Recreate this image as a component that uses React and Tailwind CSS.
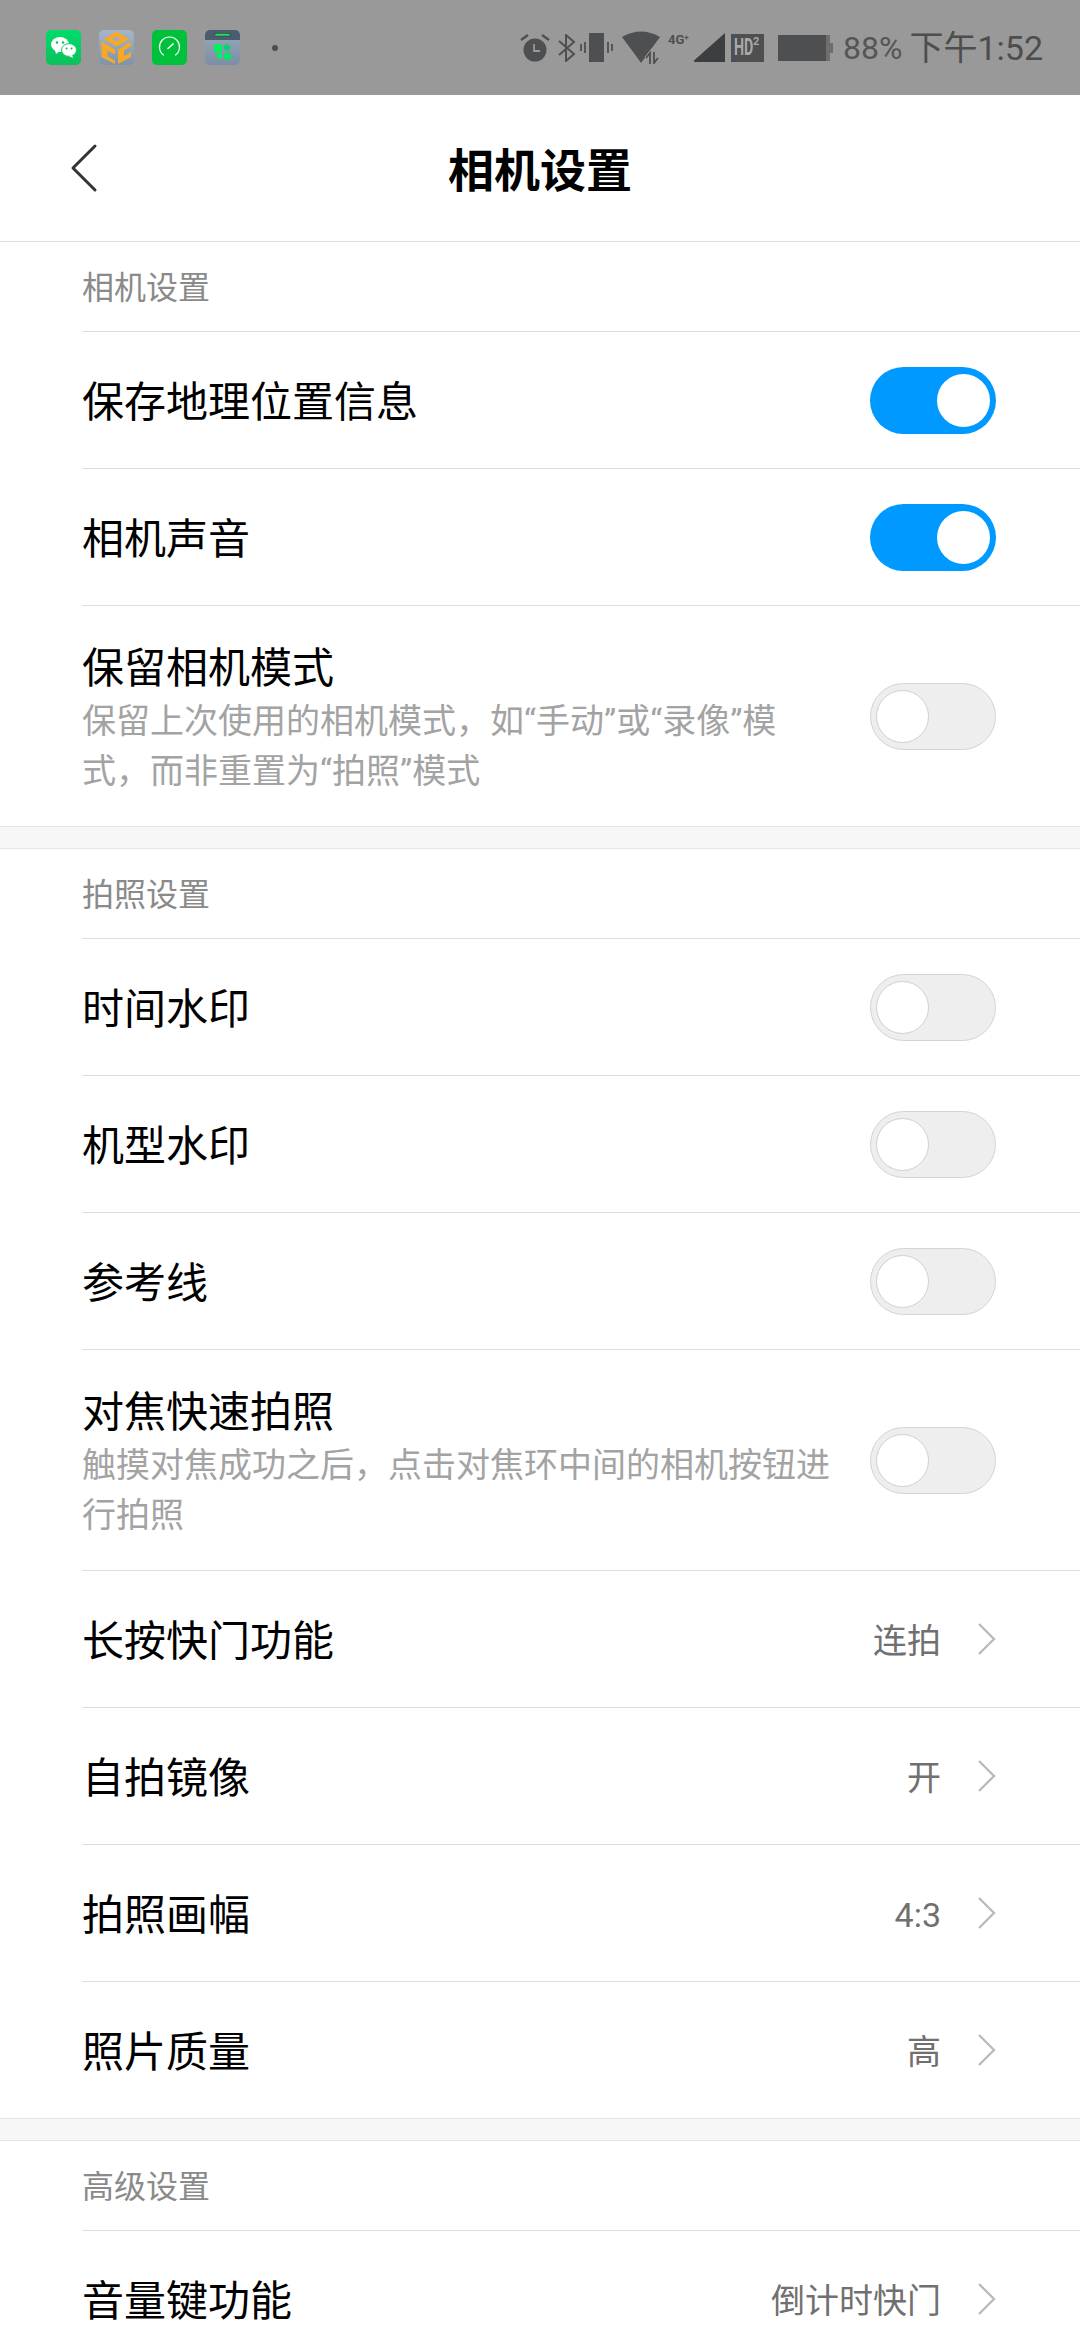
const fontStack = "font-['Roboto','Noto_Sans_CJK_SC',sans-serif]"

function Toggle({ on }) {
    if (on) {
        return (
            <div className="flex h-[67px] w-[126px] shrink-0 items-center justify-end rounded-full bg-[#0099ff] pr-[6px]">
                <div className="h-[53px] w-[53px] rounded-full bg-white" />
            </div>
        )
    }
    return (
        <div className="flex h-[67px] w-[126px] shrink-0 items-center justify-start rounded-full border border-[#d4d4d4] bg-[#eeeeee] pl-[5px]">
            <div className="h-[53px] w-[53px] rounded-full border border-[#d0d0d0] bg-white" />
        </div>
    )
}

function Chevron() {
    return (
        <svg width="19" height="34" viewBox="0 0 19 34" fill="none" className="shrink-0">
            <path d="M2 2 L17 17 L2 32" stroke="#bbbbbb" strokeWidth="2.4" />
        </svg>
    )
}

function Row({ title, desc, on, value, tall }) {
    return (
        <div className={`flex items-center justify-between border-b border-[#dedede] pr-[84px] ${tall ? 'h-[221px]' : 'h-[137px]'}`}>
            <div className="min-w-0 pt-[6px]">
                <div className={`whitespace-nowrap text-[42px] text-black ${desc ? 'leading-[54px]' : 'leading-[56px]'}`}>{title}</div>
                {desc && (
                    <div className="whitespace-nowrap text-[34px] leading-[50px] text-[#a3a3a3]">
                        {desc[0]}
                        <br />
                        {desc[1]}
                    </div>
                )}
            </div>
            {value !== undefined ? (
                <div className="flex items-center gap-[36px]">
                    <span className="pt-[4px] text-[34px] leading-[44px] text-[#707070]">{value}</span>
                    <Chevron />
                </div>
            ) : (
                <Toggle on={on} />
            )}
        </div>
    )
}

function Section({ title, children }) {
    return (
        <div className="pl-[82px]">
            <div className="flex h-[90px] items-center border-b border-[#dedede] pt-[2px] text-[32px] text-[#8a8a8a]">{title}</div>
            {children}
        </div>
    )
}

function Gap() {
    return <div className="relative -mt-px h-[23px] border-y border-[#e6e6e6] bg-[#f7f7f7]" />
}

function WeChatIcon() {
    return (
        <svg width="35" height="35" viewBox="0 0 35 35">
            <defs>
                <linearGradient id="wx" x1="0" y1="0" x2="0" y2="1">
                    <stop offset="0" stopColor="#00dc6c" />
                    <stop offset="1" stopColor="#0cc05c" />
                </linearGradient>
            </defs>
            <rect width="35" height="35" rx="5" fill="url(#wx)" />
            <ellipse cx="14" cy="14.5" rx="9" ry="7.5" fill="#fff" />
            <path d="M9 20 L10 24 L14 21 Z" fill="#fff" />
            <ellipse cx="23" cy="20" rx="7.5" ry="6.4" fill="#fff" stroke="#0ccf66" strokeWidth="1" />
            <path d="M26 25 L27 28 L23 26 Z" fill="#fff" />
            <circle cx="11" cy="12.5" r="1.2" fill="#0cc05c" />
            <circle cx="17" cy="12.5" r="1.2" fill="#0cc05c" />
            <circle cx="20.5" cy="18.5" r="1" fill="#0cc05c" />
            <circle cx="25.5" cy="18.5" r="1" fill="#0cc05c" />
        </svg>
    )
}

function CubeIcon() {
    return (
        <svg width="35" height="35" viewBox="0 0 35 35">
            <defs>
                <linearGradient id="cube" x1="0" y1="0" x2="0" y2="1">
                    <stop offset="0" stopColor="#a3b6cb" />
                    <stop offset="1" stopColor="#7f93a8" />
                </linearGradient>
            </defs>
            <rect width="35" height="35" rx="5" fill="url(#cube)" />
            <path fillRule="evenodd" d="M17.5 1.5 L30 9 L17.5 16.5 L5 9 Z M17.5 6.5 L22 9 L17.5 11.5 L13 9 Z" fill="#f9a825" />
            <path d="M2.5 11.5 L16 19.5 L16 24.5 L8.5 20.5 L8.5 26.5 L16 30.5 L16 34 L2.5 27 Z" fill="#f9a825" />
            <path d="M32 11.5 L19 19.5 L19 34 L32 27 L32 22 L25 26 L25 20.5 L32 16 Z" fill="#f9a825" />
        </svg>
    )
}

function SpeedIcon() {
    return (
        <svg width="35" height="35" viewBox="0 0 35 35">
            <rect width="35" height="35" rx="5" fill="#00c13c" />
            <path d="M11.5 25 A 10 10 0 1 1 23.5 25" fill="none" stroke="#fff" strokeWidth="1.2" strokeLinecap="round" />
            <path d="M16 18.5 L21 14" stroke="#fff" strokeWidth="1.6" strokeLinecap="round" />
        </svg>
    )
}

function AppsIcon() {
    return (
        <svg width="35" height="35" viewBox="0 0 35 35">
            <defs>
                <linearGradient id="apps" x1="0" y1="0" x2="0" y2="1">
                    <stop offset="0" stopColor="#98a9bd" />
                    <stop offset="1" stopColor="#7c8ea3" />
                </linearGradient>
            </defs>
            <rect width="35" height="35" rx="5" fill="url(#apps)" />
            <path d="M0 10 V5 A5 5 0 0 1 5 0 H30 A5 5 0 0 1 35 5 V10 Z" fill="#4b5c70" />
            <rect x="10" y="3.5" width="15" height="2.5" fill="#22e05a" stroke="#12301f" strokeWidth="0.4" />
            <rect x="9" y="14" width="8" height="8" fill="#00f060" />
            <path d="M22 13.5 L26 17.5 L22 21.5 L18 17.5 Z" fill="#00d868" />
            <rect x="12" y="23" width="5" height="5.5" fill="#00f060" />
            <rect x="19" y="23" width="7" height="6.5" fill="#00e868" />
        </svg>
    )
}

function StatusIcons() {
    const dark = '#4d4f51'
    return (
        <div className="flex items-center">
            {/* alarm */}
            <svg width="30" height="29" viewBox="0 0 30 29">
                <path d="M1 7 L8 2 M29 7 L22 2" stroke={dark} strokeWidth="2.4" />
                <circle cx="15" cy="17" r="11.5" fill={dark} />
                <path d="M14 11 V18 H20" stroke="#999999" strokeWidth="1.8" fill="none" />
            </svg>
            {/* bluetooth */}
            <svg width="19" height="28" viewBox="0 0 19 28" fill="none" className="ml-[7px]">
                <path d="M2 7 L17 20 L9 27 V1 L17 8 L2 21" stroke={dark} strokeWidth="2" />
            </svg>
            {/* vibrate */}
            <svg width="34" height="29" viewBox="0 0 34 29" className="ml-[4px]">
                <rect x="9" y="0" width="15" height="29" fill={dark} />
                <path d="M5 9 V20 M1 11 V18 M28 9 V20 M32 11 V18" stroke={dark} strokeWidth="1.8" />
            </svg>
            {/* wifi */}
            <svg width="40" height="33" viewBox="0 0 40 33" className="ml-[7px]">
                <path d="M1 6 Q20 -5 39 6 L20 32 L18 29 Z" fill={dark} />
                <path d="M29 33 V22 L25 27 M33 21 V32 L37 27" stroke="#999999" strokeWidth="3.5" fill="none" />
                <path d="M29 33 V22 L25 27 M33 21 V32 L37 27" stroke={dark} strokeWidth="1.8" fill="none" />
            </svg>
            {/* 4G+ */}
            <span className="ml-[7px] mb-[16px] w-[21px] whitespace-nowrap font-['Roboto',sans-serif] text-[13px] font-bold leading-[14px] text-[#4d4f51]">
                4G<sup className="text-[8px]">+</sup>
            </span>
            {/* signal */}
            <svg width="31" height="29" viewBox="0 0 31 29" className="ml-[5px]">
                <path d="M31 0 V29 H0 V27.5 Z" fill="#3d3e40" />
            </svg>
            {/* HD */}
            <div className="ml-[6px] flex h-[28px] w-[33px] items-start overflow-hidden bg-[#4d4f51] pl-[3px] font-['Roboto',sans-serif] font-bold text-[#a8a8a8]">
                <span className="block w-[19px] origin-left scale-x-[.62] whitespace-nowrap text-[23px] leading-[28px]">HD</span>
                <span className="text-[11px] leading-[16px]">2</span>
            </div>
            {/* battery */}
            <svg width="55" height="26" viewBox="0 0 55 26" className="ml-[14px]">
                <rect x="0" y="0" width="48" height="26" fill={dark} />
                <rect x="48" y="0" width="4" height="26" fill="#6e6e6e" />
                <rect x="52" y="8" width="3" height="10" fill="#6e6e6e" />
            </svg>
            <span className="ml-[10px] text-[32px] leading-[40px] text-[#555555]">88%</span>
            <span className="ml-[7px] text-[34px] leading-[40px] text-[#4d4d4d]">下午1:52</span>
        </div>
    )
}

export default function App() {
    return (
        <div className={`h-[2340px] w-[1080px] overflow-hidden bg-white ${fontStack}`}>
            <div className="flex h-[95px] items-center justify-between bg-[#999999] pl-[46px] pr-[37px]">
                <div className="flex items-center">
                    <WeChatIcon />
                    <div className="ml-[18px]"><CubeIcon /></div>
                    <div className="ml-[18px]"><SpeedIcon /></div>
                    <div className="ml-[18px]"><AppsIcon /></div>
                    <div className="ml-[32px] h-[6px] w-[6px] rounded-full bg-[#4d4d4d]" />
                </div>
                <StatusIcons />
            </div>

            <div className="relative flex h-[147px] items-center justify-center border-b border-[#dedede]">
                <svg width="28" height="50" viewBox="0 0 28 50" fill="none" className="absolute left-[70px] top-[48px]">
                    <path d="M25 3 L3 25 L25 47" stroke="#333333" strokeWidth="3" strokeLinecap="round" strokeLinejoin="round" />
                </svg>
                <h1 className="pt-[5px] text-[46px] font-bold leading-[56px] text-black">相机设置</h1>
            </div>

            <Section title="相机设置">
                <Row title="保存地理位置信息" on />
                <Row title="相机声音" on />
                <Row
                    tall
                    title="保留相机模式"
                    desc={['保留上次使用的相机模式，如“手动”或“录像”模', '式，而非重置为“拍照”模式']}
                />
            </Section>

            <Gap />

            <Section title="拍照设置">
                <Row title="时间水印" />
                <Row title="机型水印" />
                <Row title="参考线" />
                <Row
                    tall
                    title="对焦快速拍照"
                    desc={['触摸对焦成功之后，点击对焦环中间的相机按钮进', '行拍照']}
                />
                <Row title="长按快门功能" value="连拍" />
                <Row title="自拍镜像" value="开" />
                <Row title="拍照画幅" value="4:3" />
                <Row title="照片质量" value="高" />
            </Section>

            <Gap />

            <Section title="高级设置">
                <Row title="音量键功能" value="倒计时快门" />
            </Section>
        </div>
    )
}
